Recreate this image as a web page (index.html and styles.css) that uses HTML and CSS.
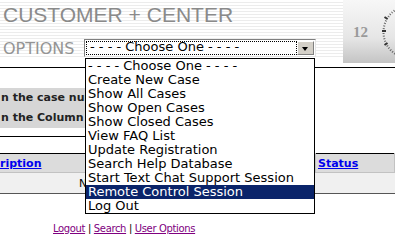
FILE: index.html
```html
<!DOCTYPE html>
<html lang="en">

<head>
  <meta charset="UTF-8">
  <meta name="viewport" content="width=device-width, initial-scale=1.0">
  <title>Customer Center</title>
  <link rel="stylesheet" href="styles.css">
</head>

<body>
  <div class="header">
    <div class="brand">
      <div class="title">CUSTOMER + CENTER</div>
      <div class="options">
        <span class="label">OPTIONS</span>
        <div class="select">
          <div class="value">- - - - Choose One - - - -</div>
          <div class="arrow"></div>
          <ul class="menu">
            <li>- - - - Choose One - - - -</li>
            <li>Create New Case</li>
            <li>Show All Cases</li>
            <li>Show Open Cases</li>
            <li>Show Closed Cases</li>
            <li>View FAQ List</li>
            <li>Update Registration</li>
            <li>Search Help Database</li>
            <li>Start Text Chat Support Session</li>
            <li class="active">Remote Control Session</li>
            <li>Log Out</li>
          </ul>
        </div>
      </div>
    </div>
    <div class="clock">
      <span class="hour">12</span>
      <svg class="dial" width="52" height="63" viewBox="0 0 52 63">
        <circle cx="67" cy="32" r="26.5" fill="none" stroke="#666" stroke-width="2" stroke-dasharray="1 1.6" />
        <line x1="39" y1="31" x2="43" y2="31" stroke="#333" stroke-width="2" />
        <line x1="41.5" y1="17" x2="44.5" y2="19" stroke="#333" stroke-width="2" />
        <line x1="41.5" y1="45" x2="44.5" y2="43" stroke="#333" stroke-width="2" />
      </svg>
    </div>
  </div>

  <div class="filters">
    <div class="filter-box">
      <div class="hint">
        <div>n the case number</div>
        <div>n the Column</div>
      </div>
    </div>
  </div>

  <table class="results">
    <tr class="head">
      <th class="desc"><a href="#">ription</a></th>
      <th class="status"><a href="#">Status</a></th>
    </tr>
    <tr class="row">
      <td colspan="2" class="empty">No cases found</td>
    </tr>
  </table>

  <div class="footer">
    <a href="#">Logout</a> | <a href="#">Search</a> | <a href="#">User Options</a>
  </div>
</body>

</html>
```

FILE: styles.css
```css
body {
  margin: 0;
  padding: 0;
  font-family: "DejaVu Sans", Verdana, sans-serif;
  background-color: white;
  color: black;
}

.header {
  display: flex;
  align-items: flex-start;
  height: 63px;
}

.brand {
  flex: 1;
  height: 58px;
  padding: 3px 0 0 3px;
  box-sizing: border-box;
  background: repeating-linear-gradient(to bottom, #ffffff 0px, #ffffff 2px, #ececec 2px, #ececec 3px);
}

.title {
  font-family: "Liberation Sans", Arial, sans-serif;
  font-size: 21px;
  line-height: 24px;
  color: #8a8a8a;
}

.options {
  display: flex;
  align-items: center;
  height: 18px;
  margin-top: 12px;
}

.label {
  width: 81px;
  font-size: 16px;
  color: #949494;
}

.select {
  position: relative;
  display: flex;
  width: 232px;
  height: 18px;
  box-sizing: border-box;
  border: 1px solid;
  border-color: #7f7f7f #e4e4e4 #e4e4e4 #7f7f7f;
  background: white;
  padding: 1px;
}

.value {
  flex: 1;
  font-size: 13px;
  line-height: 12px;
  padding-left: 4px;
  outline: 1px dotted #000;
  outline-offset: -1px;
  white-space: nowrap;
}

.arrow {
  position: relative;
  width: 17px;
  box-sizing: border-box;
  background: #d4d0c8;
  border: 1px solid;
  border-color: #ffffff #808080 #808080 #ffffff;
}

.arrow::after {
  content: "";
  position: absolute;
  left: 4px;
  top: 5px;
  border-left: 3.5px solid transparent;
  border-right: 3.5px solid transparent;
  border-top: 4px solid #000;
}

.menu {
  position: absolute;
  top: 18px;
  left: 0;
  width: 230px;
  box-sizing: border-box;
  margin: 0;
  padding: 0;
  list-style: none;
  background: white;
  border: 1px solid #000;
  font-size: 13px;
  line-height: 14px;
  z-index: 2;
}

.menu li {
  padding-left: 2px;
  white-space: nowrap;
}

.menu .active {
  background: #0a246a;
  color: white;
}

.clock {
  position: relative;
  width: 52px;
  height: 63px;
  background: linear-gradient(to bottom, #f7f7f7, #e6e6e6 60%, #c4c4c4);
}

.hour {
  position: absolute;
  left: 10px;
  top: 24px;
  font-family: "Liberation Serif", "Times New Roman", serif;
  font-size: 15px;
  font-weight: bold;
  color: #9a9a9a;
}

.dial {
  position: absolute;
  left: 0;
  top: 0;
}

.filters {
  margin-top: 4px;
  border-top: 1px solid #000;
}

.filter-box {
  width: 300px;
  padding: 20px 0 8px 0;
  border-bottom: 1px solid #000;
}

.hint {
  background: #d6d6d6;
  font-size: 11px;
  font-weight: bold;
  line-height: 20px;
  color: #222;
  padding-left: 1px;
}

.results {
  width: 100%;
  margin-top: 16px;
  border-collapse: collapse;
  border-top: 1px solid #000;
  border-bottom: 1px solid #555;
  font-size: 11px;
}

.results th {
  height: 18px;
  padding: 0 0 0 2px;
  text-align: left;
  background: #dcdcdc;
  border: 1px solid #c2c2c2;
  border-top: none;
}

.results .desc {
  padding-left: 0;
  border-left: none;
}

.results .status {
  width: 76px;
}

.results th a {
  color: #0000ee;
  font-weight: bold;
}

.results td {
  height: 20px;
  padding: 0;
  background: #f0f0f0;
}

.empty {
  padding-left: 79px !important;
}

.footer {
  margin-top: 29px;
  padding-left: 53px;
  font-size: 10px;
  letter-spacing: -0.35px;
}

.footer a {
  color: #800080;
}
```
